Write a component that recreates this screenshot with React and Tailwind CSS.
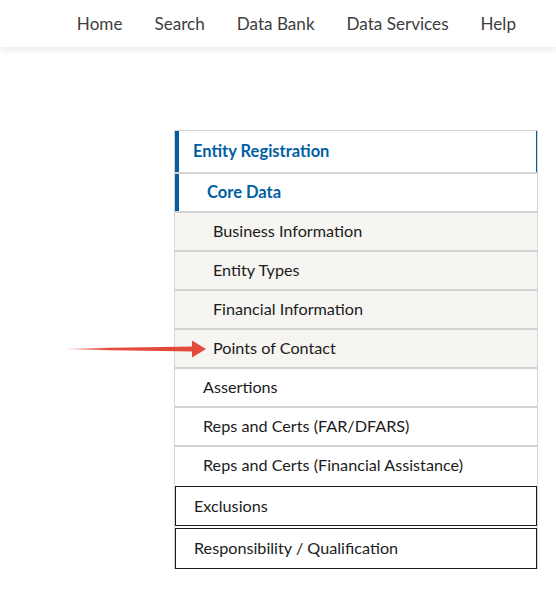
import React from "react";

function Row({ children, className = "" }) {
  return (
    <div className={"flex items-center h-[37px] text-[16.2px] text-[#1b1b1b] " + className}>{children}</div>
  );
}

export default function App() {
  const sub = ["Business Information", "Entity Types", "Financial Information", "Points of Contact"];
  const other = ["Assertions", "Reps and Certs (FAR/DFARS)", "Reps and Certs (Financial Assistance)"];
  return (
    <div className="relative w-[556px] h-[616px] bg-white font-['Lato',sans-serif]">
      <header className="relative z-10 h-[47px] bg-white shadow-[0_2px_8px_rgba(0,0,0,0.10)] flex items-center justify-end gap-8 pr-10 text-[17.1px] text-[#3d3d3d]">
        <span>Home</span>
        <span>Search</span>
        <span>Data Bank</span>
        <span>Data Services</span>
        <span>Help</span>
      </header>

      <nav className="ml-[174px] mt-[83px] w-[364px] border border-[#d3d3d3] border-b-0 bg-white">
        <div className="flex items-center h-[41px] border-l-4 border-r border-l-[#005ea2] border-r-[#005ea2] pl-[14px] text-[16.5px] font-bold text-[#005ea2]">
          Entity Registration
        </div>
        <div className="h-[2px] bg-[#d3d3d3]" />
        <div className="flex items-center h-[37px] border-l-4 border-l-[#005ea2] pl-[28px] text-[16.5px] font-bold text-[#005ea2]">
          Core Data
        </div>
        {sub.map((s) => (
          <React.Fragment key={s}>
            <div className="h-[2px] bg-[#d3d3d3]" />
            <Row className="bg-[#f6f5f1] pl-[38px]">{s}</Row>
          </React.Fragment>
        ))}
        {other.map((s) => (
          <React.Fragment key={s}>
            <div className="h-[2px] bg-[#d3d3d3]" />
            <Row className="pl-[28px]">{s}</Row>
          </React.Fragment>
        ))}
        <div className="h-[2px]" />
        <div className="flex flex-col gap-[2px]">
          <div className="flex items-center h-[40px] border border-[#1b1b1b] pl-[18px] text-[16.2px] text-[#1b1b1b]">Exclusions</div>
          <div className="flex items-center h-[41px] border border-[#1b1b1b] pl-[18px] text-[16.2px] text-[#1b1b1b]">Responsibility / Qualification</div>
        </div>
      </nav>

      <svg className="absolute left-[63px] top-[340px]" width="144" height="18" viewBox="0 0 144 18">
        <defs>
          <linearGradient id="tail" x1="0" x2="1" y1="0" y2="0">
            <stop offset="0" stopColor="#e24a3b" stopOpacity="0" />
            <stop offset="0.35" stopColor="#e24a3b" stopOpacity="1" />
            <stop offset="1" stopColor="#e24a3b" />
          </linearGradient>
        </defs>
        <polygon points="0,8.5 131,6.6 131,11.4 0,9.5" fill="url(#tail)" />
        <polygon points="129,0.5 143,9 129,17.5" fill="#e24a3b" />
      </svg>
    </div>
  );
}
